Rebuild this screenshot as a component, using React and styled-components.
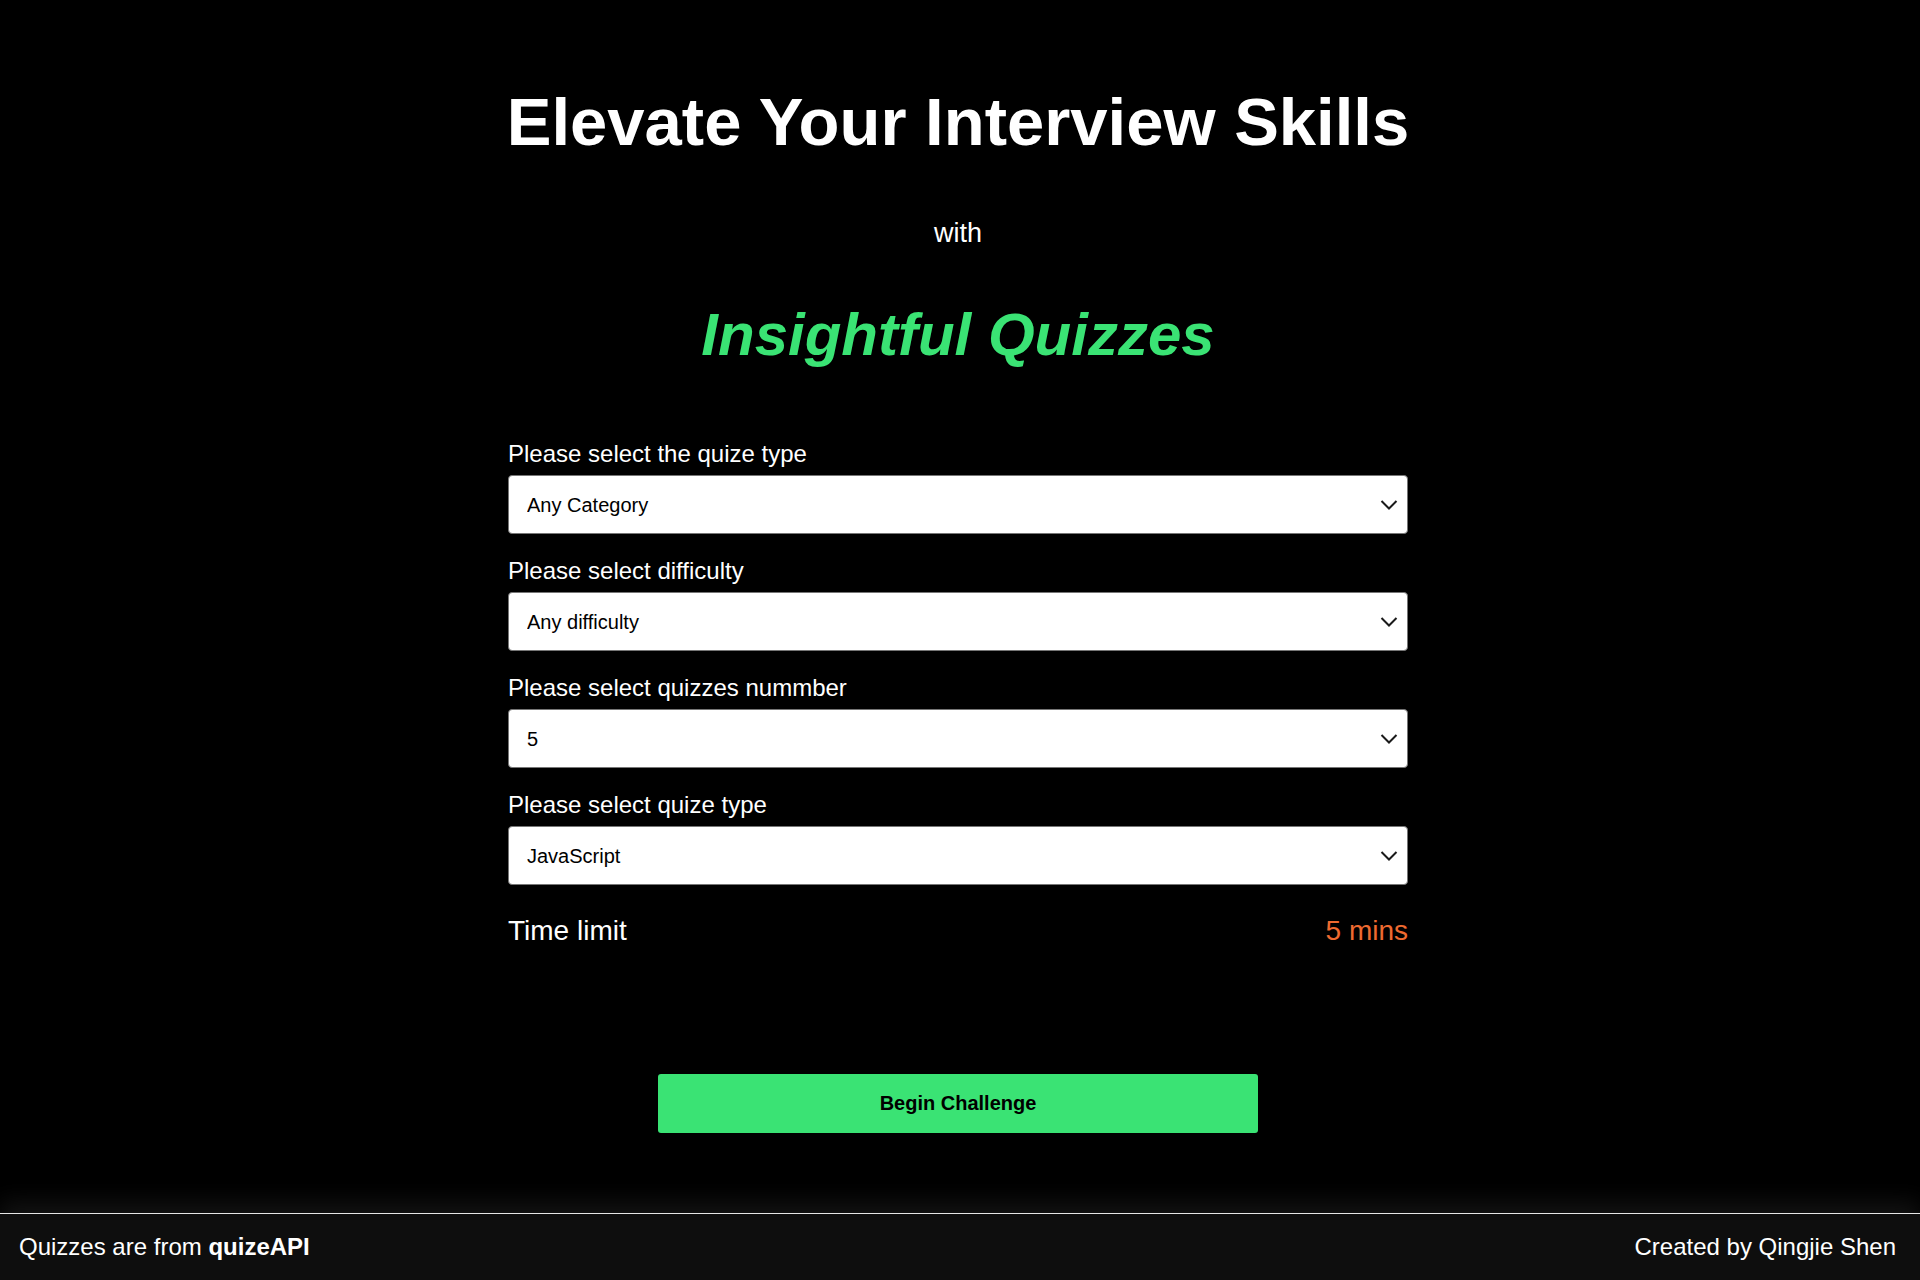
import React from "react"
import styled, { createGlobalStyle } from "styled-components"

const GlobalStyle = createGlobalStyle`
  html, body {
    margin: 0;
    padding: 0;
    background: #000;
    font-family: "Liberation Sans", Arial, sans-serif;
    color: #fff;
  }
  * { box-sizing: border-box; }
`

const Page = styled.div`
  min-height: 100vh;
  display: flex;
  flex-direction: column;
  background: #000;
`

const Main = styled.main`
  flex: 1;
  display: flex;
  flex-direction: column;
  align-items: center;
  padding: 83px 4px 0 0;
`

const Title = styled.h1`
  margin: 0;
  font-size: 67px;
  font-weight: 700;
  line-height: 77px;
  color: #fff;
`

const With = styled.p`
  margin: 58px 0 0;
  font-size: 27px;
  line-height: 31px;
`

const Highlight = styled.h2`
  margin: 51px 0 0;
  font-size: 60px;
  font-style: italic;
  font-weight: 700;
  line-height: 69px;
  color: #3ae374;
`

const Form = styled.form`
  width: 900px;
  margin-top: 71px;
  display: flex;
  flex-direction: column;
  gap: 23px;
`

const Field = styled.label`
  display: flex;
  flex-direction: column;
  gap: 7px;
`

const LabelText = styled.span`
  font-size: 24px;
  line-height: 28px;
  color: #fff;
`

const SelectWrap = styled.div`
  position: relative;
  height: 59px;
`

const Select = styled.select`
  appearance: none;
  width: 100%;
  height: 100%;
  padding: 0 44px 0 18px;
  border: 1px solid #767676;
  border-radius: 4px;
  background: #fff;
  color: #000;
  font-family: "Liberation Sans", Arial, sans-serif;
  font-size: 20px;
  outline: none;
`

const Chevron = styled.svg`
  position: absolute;
  right: 10px;
  top: 50%;
  transform: translateY(-50%);
  pointer-events: none;
`

const TimeRow = styled.div`
  display: flex;
  justify-content: space-between;
  align-items: center;
  margin-top: 7px;
  font-size: 28px;
  line-height: 32px;
`

const TimeValue = styled.span`
  color: #ee6a30;
`

const StartButton = styled.button`
  margin-top: 127px;
  width: 600px;
  height: 59px;
  border: none;
  border-radius: 3px;
  background: #3ae374;
  color: #000;
  font-family: "Liberation Sans", Arial, sans-serif;
  font-size: 20px;
  font-weight: 700;
  cursor: pointer;
`

const Footer = styled.footer`
  height: 67px;
  display: flex;
  justify-content: space-between;
  align-items: center;
  padding: 0 24px 0 19px;
  background: #0e0e0e;
  border-top: 1px solid #e6e6e6;
  box-shadow: 0 -12px 22px rgba(255, 255, 255, 0.07);
  font-size: 24px;
  color: #fff;
`

const fields = [
  { label: "Please select the quize type", value: "Any Category" },
  { label: "Please select difficulty", value: "Any difficulty" },
  { label: "Please select quizzes nummber", value: "5" },
  { label: "Please select quize type", value: "JavaScript" },
]

const SelectField = ({ label, value }) => (
  <Field>
    <LabelText>{label}</LabelText>
    <SelectWrap>
      <Select defaultValue={value}>
        <option value={value}>{value}</option>
      </Select>
      <Chevron width="18" height="11" viewBox="0 0 18 11">
        <path d="M1.5 1.5 L9 9 L16.5 1.5" fill="none" stroke="#1a1a1a" strokeWidth="2" />
      </Chevron>
    </SelectWrap>
  </Field>
)

const App = () => {
  return (
    <Page>
      <GlobalStyle />
      <Main>
        <Title>Elevate Your Interview Skills</Title>
        <With>with</With>
        <Highlight>Insightful Quizzes</Highlight>
        <Form onSubmit={(e) => e.preventDefault()}>
          {fields.map((f) => (
            <SelectField key={f.label} label={f.label} value={f.value} />
          ))}
          <TimeRow>
            <span>Time limit</span>
            <TimeValue>5 mins</TimeValue>
          </TimeRow>
        </Form>
        <StartButton type="button">Begin Challenge</StartButton>
      </Main>
      <Footer>
        <span>
          Quizzes are from <b>quizeAPI</b>
        </span>
        <span>Created by Qingjie Shen</span>
      </Footer>
    </Page>
  )
}

export default App
